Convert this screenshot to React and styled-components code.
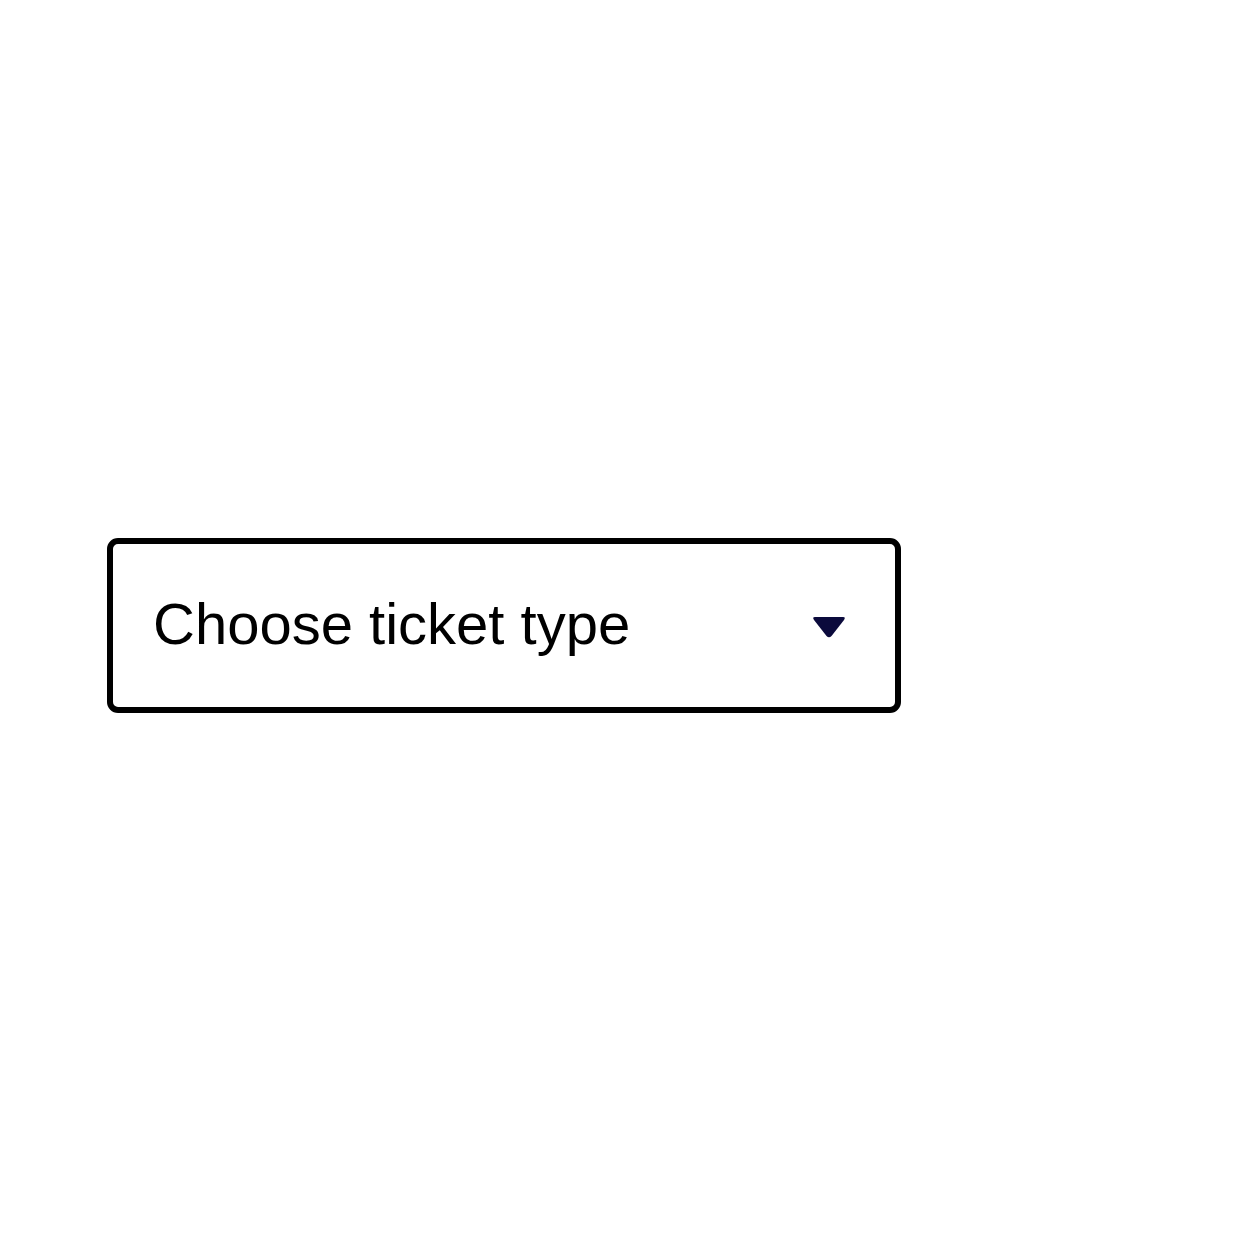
import styled, { createGlobalStyle } from "styled-components";

const GlobalStyle = createGlobalStyle`
  html, body {
    margin: 0;
    padding: 0;
    background: #ffffff;
  }
`;

const Page = styled.div`
  min-height: 1258px;
  box-sizing: border-box;
  padding: 538px 0 0 107px;
  font-family: "Liberation Sans", Arial, sans-serif;
`;

const SelectBox = styled.div`
  width: 794px;
  height: 175px;
  box-sizing: border-box;
  border: 6px solid #000000;
  border-radius: 11px;
  background: #ffffff;
  display: flex;
  align-items: center;
  justify-content: space-between;
  padding: 0 49px 0 40px;
  cursor: pointer;
`;

const Placeholder = styled.span`
  font-size: 58px;
  color: #000000;
  line-height: 1;
  margin-top: -3px;
`;

const Caret = styled.svg`
  display: block;
  width: 34px;
  height: 21px;
  margin-top: 3px;
`;

export default function App() {
  return (
    <>
      <GlobalStyle />
      <Page>
        <SelectBox role="combobox" aria-expanded="false">
          <Placeholder>Choose ticket type</Placeholder>
          <Caret viewBox="0 0 34 21">
            <path
              d="M3 0 H31 Q34 0 32 3 L19.5 19 Q17 21.5 14.5 19 L2 3 Q0 0 3 0 Z"
              fill="#0b0a3c"
            />
          </Caret>
        </SelectBox>
      </Page>
    </>
  );
}
